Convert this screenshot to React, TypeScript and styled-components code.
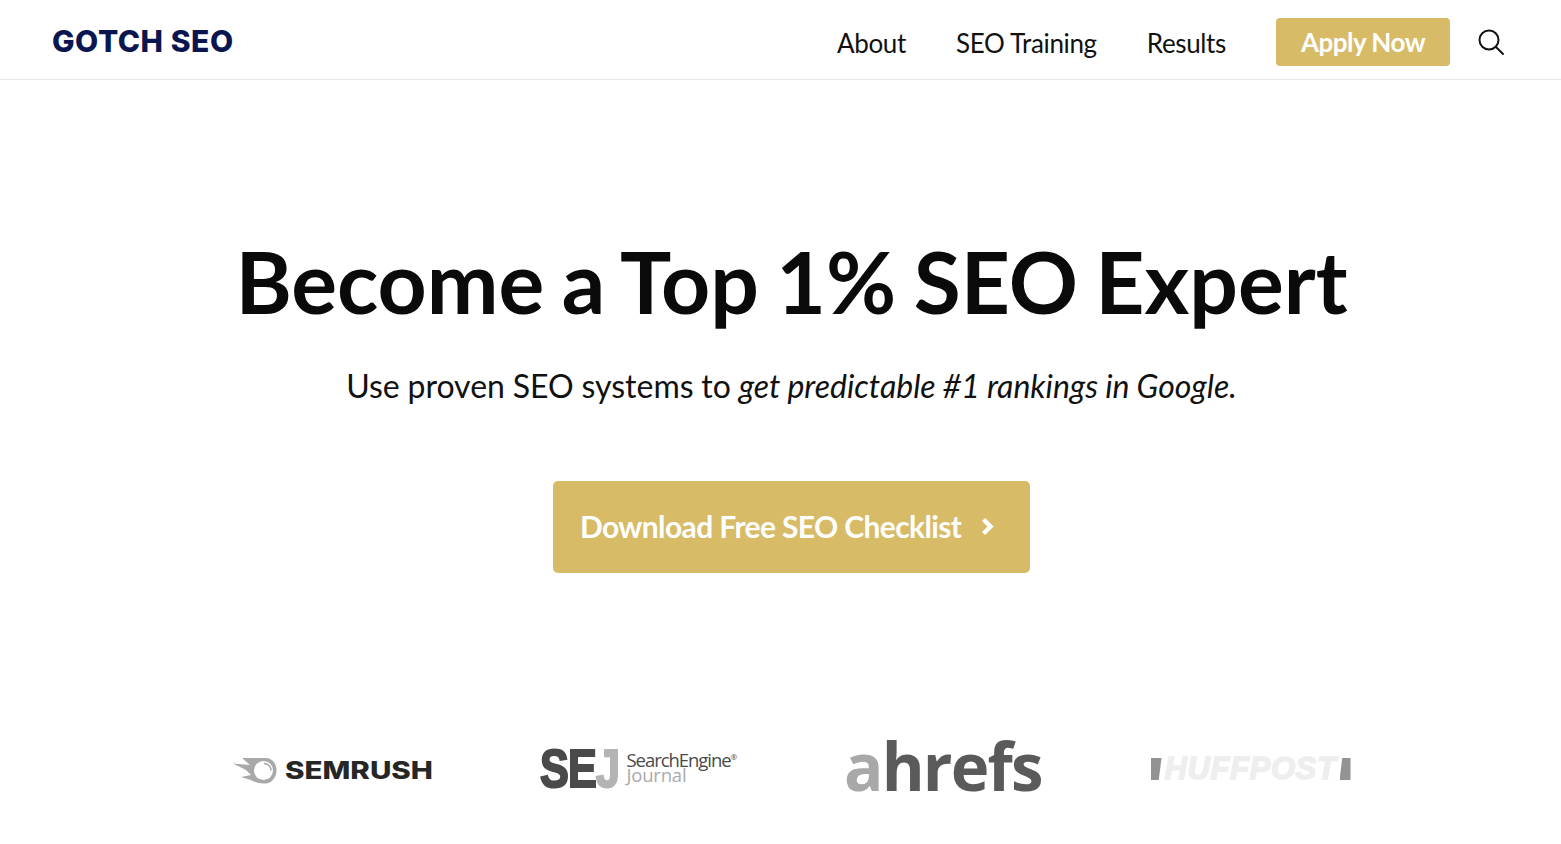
import React from 'react';
import styled, { createGlobalStyle } from 'styled-components';

const GOLD = '#d7bb67';
const NAVY = '#0a1650';

const GlobalStyle = createGlobalStyle`
  html, body {
    margin: 0;
    padding: 0;
    background: #fff;
    font-family: Lato, "Open Sans", sans-serif;
    color: #0a0a0a;
  }
  * { box-sizing: border-box; }
`;

const Header = styled.header`
  height: 80px;
  padding: 5px 57px 0 52px;
  display: flex;
  align-items: center;
  justify-content: space-between;
  border-bottom: 1px solid #e8e8e8;
`;

const Logo = styled.a`
  font-family: "Inter", sans-serif;
  font-size: 30px;
  font-weight: 800;
  letter-spacing: 0.55px;
  color: ${NAVY};
  margin-top: -2px;
`;

const Nav = styled.nav`
  display: flex;
  align-items: center;
  gap: 50px;
`;

const NavLink = styled.a`
  padding-top: 1px;
  font-size: 26px;
  color: #111;
  letter-spacing: -0.35px;
`;

const ApplyButton = styled.a`
  width: 174px;
  height: 48px;
  display: flex;
  align-items: center;
  justify-content: center;
  background: ${GOLD};
  border-radius: 4px;
  color: #fff;
  font-size: 26px;
  font-weight: 700;
  letter-spacing: -0.5px;
`;

const SearchIcon = styled.svg`
  width: 28px;
  height: 28px;
  margin-left: -23px;
  margin-right: -1px;
`;

const Hero = styled.main`
  padding: 151px 0 0 22px;
  display: flex;
  flex-direction: column;
  align-items: center;
`;

const Title = styled.h1`
  margin: 0;
  font-size: 85.7px;
  line-height: 100px;
  font-weight: 700;
  word-spacing: -3.4px;
  color: #0a0a0a;
`;

const Subtitle = styled.p`
  margin: 35px 0 0;
  font-size: 32px;
  line-height: 40px;
  color: #111;
  word-spacing: -0.4px;
  em { font-style: italic; }
`;

const CtaButton = styled.a`
  margin-top: 75px;
  width: 477px;
  height: 92px;
  display: flex;
  align-items: center;
  gap: 20px;
  padding: 0 0 2px 27px;
  background: ${GOLD};
  border-radius: 5px;
  color: #fff;
  font-size: 30px;
  font-weight: 700;
  letter-spacing: -0.62px;
`;

const Logos = styled.section`
  margin-top: 166px;
  width: 1118px;
  height: 60px;
  display: flex;
  align-items: center;
  justify-content: space-between;
`;

const LogoItem = styled.div<{ $width: number; $drop?: number }>`
  width: ${(p) => p.$width}px;
  margin-top: ${(p) => p.$drop ?? 0}px;
  display: flex;
  align-items: center;
`;

const SemrushName = styled.span`
  font-family: "Inter", sans-serif;
  font-size: 24px;
  font-weight: 800;
  color: #262626;
  margin-left: 8px;
  transform: scaleX(1.23);
  transform-origin: left center;
  width: 146px;
  white-space: nowrap;
`;

const SejMarks = styled.div`
  width: 87px;
  flex: none;
  transform: scaleX(0.8);
  transform-origin: left center;
  white-space: nowrap;
`;

const SejMark = styled.span<{ $light?: boolean }>`
  font-family: "Liberation Sans", sans-serif;
  font-size: 54px;
  line-height: 50px;
  font-weight: 700;
  letter-spacing: -1px;
  color: ${(p) => (p.$light ? '#b4b4b4' : '#4a4a4a')};
  -webkit-text-stroke: 2.2px ${(p) => (p.$light ? '#b4b4b4' : '#4a4a4a')};
`;

const SejWords = styled.div`
  display: flex;
  flex-direction: column;
  margin-top: -1px;
  font-family: "Open Sans", sans-serif;
  font-size: 18.5px;
  line-height: 15px;
  letter-spacing: -1.05px;
  color: #4a4a4a;
  white-space: nowrap;
  sup {
    font-size: 8px;
    line-height: 0;
    letter-spacing: 0;
  }
`;

const SejSecond = styled.span`
  color: #aaa;
  letter-spacing: -0.2px;
`;

const Ahrefs = styled.div`
  font-family: "Open Sans", sans-serif;
  font-size: 66px;
  line-height: 60px;
  font-weight: 700;
  letter-spacing: -1.8px;
  color: #5a5a5a;
  margin: -8px 0 0 -2px;
  transform: scaleX(0.99);
  transform-origin: left center;
  white-space: nowrap;
`;

const AhrefsA = styled.span`
  color: #a8a8a8;
`;

const HuffBar = styled.span`
  width: 11px;
  height: 22px;
  flex: none;
  background: #939393;
  clip-path: polygon(0 0, 100% 0, 75% 100%, 0 100%);
`;

const HuffBarRight = styled(HuffBar)`
  clip-path: polygon(25% 0, 100% 0, 100% 100%, 0 100%);
`;

const HuffName = styled.span`
  font-family: "Liberation Sans", sans-serif;
  font-size: 31px;
  line-height: 30px;
  font-weight: 700;
  font-style: italic;
  letter-spacing: 0.6px;
  color: #eeeeee;
  -webkit-text-stroke: 1.4px #eeeeee;
  width: 178px;
  text-align: center;
  white-space: nowrap;
`;

export default function App() {
  return (
    <>
      <GlobalStyle />
      <Header>
        <Logo>GOTCH SEO</Logo>
        <Nav>
          <NavLink>About</NavLink>
          <NavLink>SEO Training</NavLink>
          <NavLink>Results</NavLink>
          <ApplyButton>Apply Now</ApplyButton>
          <SearchIcon viewBox="0 0 28 28" fill="none" stroke="#111" strokeWidth="2">
            <circle cx="12" cy="12" r="9.5" />
            <path d="M19 19l7 7" strokeLinecap="round" />
          </SearchIcon>
        </Nav>
      </Header>
      <Hero>
        <Title>Become a Top 1% SEO Expert</Title>
        <Subtitle>
          Use proven SEO systems to <em>get predictable #1 rankings in Google.</em>
        </Subtitle>
        <CtaButton>
          Download Free SEO Checklist
          <svg width="13" height="19" viewBox="0 0 13 19" fill="none" stroke="#fff" strokeWidth="4.4">
            <path d="M2.5 2.5L9.5 9.5l-7 7" />
          </svg>
        </CtaButton>
        <Logos>
          <LogoItem $width={198} $drop={2}>
            <svg width="44" height="27" viewBox="0 0 44 27">
              <path
                fill="#a9a9a9"
                d="M9 1H33C39 1 43.5 6.5 43.5 13.5C43.5 20 39 26 33 26.5C27 27 22 25.5 18 23L8 20L18 18L13 13L0 6.5L17 8Z"
              />
              <circle cx="30.5" cy="13.5" r="9.5" fill="#fff" />
              <path d="M31 6.5A7 7 0 0 1 38 13.5" fill="none" stroke="#a9a9a9" strokeWidth="1.6" />
            </svg>
            <SemrushName>SEMRUSH</SemrushName>
          </LogoItem>
          <LogoItem $width={197} $drop={-3}>
            <SejMarks>
              <SejMark>SE</SejMark>
              <SejMark $light>J</SejMark>
            </SejMarks>
            <SejWords>
              <span>
                SearchEngine<sup>®</sup>
              </span>
              <SejSecond>Journal</SejSecond>
            </SejWords>
          </LogoItem>
          <LogoItem $width={196}>
            <Ahrefs>
              <AhrefsA>a</AhrefsA>hrefs
            </Ahrefs>
          </LogoItem>
          <LogoItem $width={200}>
            <HuffBar />
            <HuffName>HUFFPOST</HuffName>
            <HuffBarRight />
          </LogoItem>
        </Logos>
      </Hero>
    </>
  );
}
